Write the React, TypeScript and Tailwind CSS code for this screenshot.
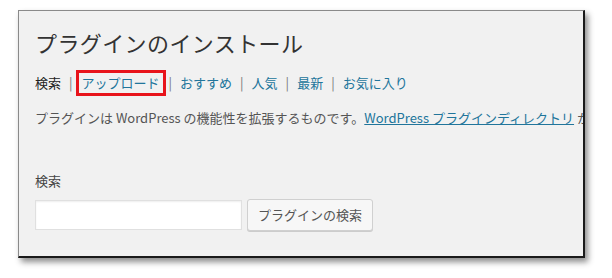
import React from 'react';

const font = { fontFamily: '"Noto Sans CJK JP", "Noto Sans", sans-serif' };

const Sep = () => <span className="px-[8px] text-[#777]">|</span>;

export default function App() {
  return (
    <div className="w-[612px] h-[278px] bg-white pt-[10px] pl-[18px]" style={font}>
      <div className="w-[567px] h-[248px] bg-[#f1f1f1] border border-[#8a8a8a] border-r-[#1a1a1a] border-b-[#1a1a1a] border-r-2 border-b-2 shadow-[3px_4px_6px_rgba(0,0,0,0.45)] overflow-hidden pl-[16px]">
        <h1 className="mt-[16px] text-[22px] leading-[30px] text-[#333] tracking-[0.4px]">プラグインのインストール</h1>

        <div className="mt-[13px] flex items-center text-[13px] leading-[20px] whitespace-nowrap">
          <span className="text-[#222]">検索</span>
          <Sep />
          <span className="border-[3px] border-[#e8141b] px-[3px] leading-[20px] -mx-[5px]">
            <a className="text-[#21759b]">アップロード</a>
          </span>
          <Sep />
          <a className="text-[#21759b]">おすすめ</a>
          <Sep />
          <a className="text-[#21759b]">人気</a>
          <Sep />
          <a className="text-[#21759b]">最新</a>
          <Sep />
          <a className="text-[#21759b]">お気に入り</a>
        </div>

        <p className="mt-[12px] text-[13px] leading-[20px] text-[#555] whitespace-nowrap">
          プラグインは WordPress の機能性を拡張するものです。
          <a className="text-[#21759b] underline">WordPress プラグインディレクトリ</a> か
        </p>

        <div className="mt-[43px] text-[13px] leading-[20px] text-[#444]">検索</div>

        <div className="mt-[8px] flex items-center gap-[5px]">
          <input
            type="text"
            className="w-[207px] h-[30px] bg-white border border-[#e0e0e0] shadow-[inset_0_1px_2px_rgba(0,0,0,0.07)] outline-none"
          />
          <button className="h-[32px] px-[10px] bg-[#f7f7f7] border border-[#d0d0d0] rounded-[3px] text-[13px] text-[#555] shadow-[0_1px_0_#ccc]">
            プラグインの検索
          </button>
        </div>
      </div>
    </div>
  );
}
